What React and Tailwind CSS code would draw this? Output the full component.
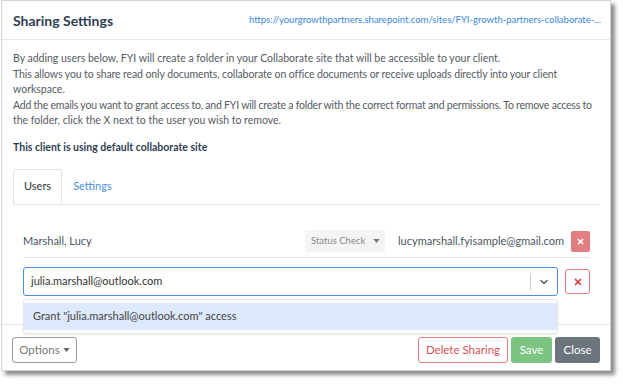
import { ChevronDown, X } from 'lucide-react'

function Caret({ className = '' }) {
  return (
    <svg viewBox="0 0 8 5" className={`inline-block w-[7px] h-[4px] ${className}`}>
      <path d="M0 0 L8 0 L4 5 Z" fill="currentColor" />
    </svg>
  )
}

const intro = [
  { text: 'By adding users below, FYI will create a folder in your Collaborate site that will be accessible to your client.', cls: '' },
  { text: 'This allows you to share read only documents, collaborate on office documents or receive uploads directly into your client', cls: 'tracking-[-0.1px]' },
  { text: 'workspace.', cls: '' },
  { text: 'Add the emails you want to grant access to, and FYI will create a folder with the correct format and permissions. To remove access to', cls: 'tracking-[-0.22px]' },
  { text: 'the folder, click the X next to the user you wish to remove.', cls: '' },
]

export default function App() {
  return (
    <div className="w-[623px] h-[386px] bg-white font-['Lato',sans-serif] pl-[1px]">
      <div className="w-[610px] h-[371px] bg-white border border-[#d4d4d4] shadow-[4px_4px_4px_rgba(0,0,0,0.45)] flex flex-col">
        <div className="h-[39px] flex items-center justify-between pl-[11px] pr-[9px] border-b border-[#e6e6e6]">
          <h2 className="text-[14px] font-bold text-[#2f3e52]">Sharing Settings</h2>
          <a className="text-[9.5px] text-[#3a86dd] whitespace-nowrap">
            https://yourgrowthpartners.sharepoint.com/sites/FYI-growth-partners-collaborate-...
          </a>
        </div>

        <div className="px-[11px] pt-[11px] text-[10.5px] leading-[15.5px] text-[#555b63]">
          {intro.map(line => (
            <p key={line.text} className={`whitespace-nowrap ${line.cls}`}>{line.text}</p>
          ))}
          <p className="mt-[11px] font-bold text-[#2f3e52]">This client is using default collaborate site</p>
        </div>

        <div className="mx-[11px] mt-[14px] flex border-b border-[#e6e6e6] text-[11px]">
          <div className="h-[35px] px-[10px] flex items-center border border-[#e2e2e2] border-b-white -mb-px rounded-t-[3px] text-[#333]">Users</div>
          <div className="h-[35px] px-[11px] flex items-center text-[#4a8fe0]">Settings</div>
        </div>

        <div className="mx-[21px] mr-[20px] mt-[25px] flex items-center h-[22px] text-[11px] text-[#4a5563]">
          <div className="flex-1 pt-[1px]">Marshall, Lucy</div>
          <div className="w-[80px] h-[22px] bg-[#f4f4f4] rounded-[2px] flex items-center justify-between pl-[6px] pr-[5px] text-[9.5px] text-[#8a8a8a]">
            <span>Status Check</span>
            <Caret className="text-[#777] w-[5px] h-[3px]" />
          </div>
          <div className="ml-[13px] text-[11px] text-[#4a5563]">lucymarshall.fyisample@gmail.com</div>
          <div className="ml-[7px] w-[19px] h-[21px] bg-[#e27d82] rounded-[2px] flex items-center justify-center">
            <X className="w-[9px] h-[9px] text-white" strokeWidth={4} />
          </div>
        </div>

        <div className="mx-[21px] mr-[20px] mt-[5px] border-b border-[#e3e3e3]" />

        <div className="relative mx-[21px] mr-[20px] mt-[9px] flex items-center">
          <div className="w-[535px] h-[29px] border border-[#4a8fe0] rounded-[3px] flex items-center text-[11px] text-[#333]">
            <span className="pl-[7px] flex-1">julia.marshall@outlook.com</span>
            <div className="w-px h-[17px] bg-[#cfcfcf]" />
            <div className="w-[26px] flex justify-center">
              <ChevronDown className="w-[12px] h-[12px] text-[#555]" strokeWidth={2.5} />
            </div>
          </div>
          <div className="ml-[7px] w-[25px] h-[25px] border border-[#e07b80] rounded-[3px] flex items-center justify-center">
            <X className="w-[10px] h-[10px] text-[#d9363e]" strokeWidth={4} />
          </div>
          <div className="absolute left-0 top-[32px] w-[535px] h-[35px] bg-white border border-[#e6e6e6] rounded-[3px] shadow-[0_1px_2px_rgba(0,0,0,0.08)] py-[3px] z-10">
            <div className="h-full bg-[#dde9fc] flex items-center pl-[9px] text-[11px] text-[#444]">
              Grant "julia.marshall@outlook.com" access
            </div>
          </div>
        </div>

        <div className="mt-[28px] border-t border-[#e6e6e6] flex items-center justify-between pl-[10px] pr-[10px] pt-[12px] text-[11.5px]">
          <button className="h-[26px] w-[65px] border border-[#9a9a9a] rounded-[3px] text-[#777] flex items-center justify-center gap-[3px]">
            Options <Caret className="text-[#666]" />
          </button>
          <div className="flex gap-[3px]">
            <button className="h-[26px] w-[90px] border border-[#e27d82] rounded-[3px] text-[#dd4f57] bg-white">Delete Sharing</button>
            <button className="h-[26px] w-[41px] rounded-[3px] text-white bg-[#7cc482]">Save</button>
            <button className="h-[26px] w-[45px] rounded-[3px] text-white bg-[#6c757d]">Close</button>
          </div>
        </div>
      </div>
    </div>
  )
}
